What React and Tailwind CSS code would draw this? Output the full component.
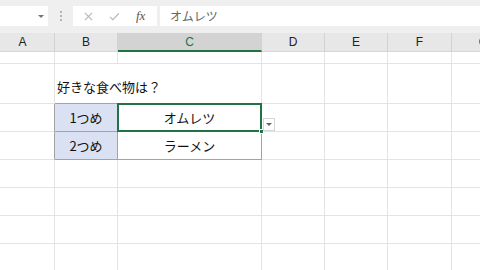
const FONT = { fontFamily: '"Liberation Sans", "Noto Sans CJK JP", sans-serif' };
const JP = { fontFamily: '"Noto Sans CJK JP", "Liberation Sans", sans-serif' };

const cols = [
    { key: 'A', w: 'w-[64px] -ml-[9px]' },
    { key: 'B', w: 'w-[63px]' },
    { key: 'C', w: 'w-[144px]' },
    { key: 'D', w: 'w-[63px]' },
    { key: 'E', w: 'w-[63px]' },
    { key: 'F', w: 'w-[64px]' },
    { key: 'G', w: 'w-[64px]' },
];

const rows = [
    { h: 'h-[12px]' },
    { h: 'h-[40px]' },
    { h: 'h-[28px]' },
    { h: 'h-[28px]' },
    { h: 'h-[28px]' },
    { h: 'h-[28px]' },
    { h: 'h-[28px]' },
    { h: 'h-[28px]' },
    { h: 'h-[28px]' },
];

// tabla B3:C4
function inTable(r, c) {
    return (r === 2 || r === 3) && (c === 'B' || c === 'C');
}

function Cell({ r, c, w }) {
    const darkRight = (r === 2 || r === 3) && (c === 'A' || c === 'B' || c === 'C');
    const darkBottom = (r >= 1 && r <= 3) && (c === 'B' || c === 'C');
    const hideRight = r === 1 && c === 'B';
    const active = r === 2 && c === 'C';

    let content = null;
    if (r === 1 && c === 'B') {
        content = (
            <span className="absolute left-[2px] top-[13px] whitespace-nowrap text-[13px] text-[#111]" style={JP}>
                好きな食べ物は？
            </span>
        );
    }
    if (inTable(r, c)) {
        const labels = { B2: '1つめ', B3: '2つめ', C2: 'オムレツ', C3: 'ラーメン' };
        content = (
            <span className="flex h-full items-center justify-center text-[13px] text-[#111]" style={JP}>
                {labels[c + r]}
            </span>
        );
    }

    return (
        <div
            className={[
                'relative shrink-0 border-b border-r',
                w,
                c === 'B' && inTable(r, c) ? 'bg-[#d9e1f2]' : 'bg-white',
                hideRight ? 'border-r-transparent' : darkRight ? 'border-r-[#a3a3a3]' : 'border-r-[#e3e3e3]',
                darkBottom ? 'border-b-[#a3a3a3]' : 'border-b-[#e3e3e3]',
                hideRight ? 'z-10' : '',
                active ? 'z-20' : '',
            ].join(' ')}
        >
            {content}
            {active && (
                <>
                    <div className="pointer-events-none absolute -left-[1px] -top-[1px] bottom-[-1px] right-[-1px] border-2 border-[#217346]" />
                    <div className="absolute -bottom-[3px] -right-[3px] h-[5px] w-[5px] border border-white bg-[#217346]" />
                    <div className="absolute -right-[14px] top-[14px] flex h-[13px] w-[12px] items-center justify-center border border-[#d6d6d6] bg-white">
                        <span className="h-0 w-0 border-x-[3px] border-t-[3px] border-x-transparent border-t-[#666]" />
                    </div>
                </>
            )}
        </div>
    );
}

export default function App() {
    return (
        <div className="h-[270px] w-[480px] overflow-hidden bg-white" style={FONT}>
            {/* barra de fórmulas */}
            <div className="flex h-[33px] items-start bg-[#efefef] pt-[6px]">
                <div className="flex h-[20px] w-[48px] items-center justify-end bg-white pr-[4px]">
                    <span className="h-0 w-0 border-x-[3px] border-t-[3px] border-x-transparent border-t-[#777]" />
                </div>
                <div className="ml-[11px] flex h-[20px] w-[3px] flex-col items-center justify-center gap-[2px]">
                    <span className="h-[2px] w-[2px] bg-[#b5b5b5]" />
                    <span className="h-[2px] w-[2px] bg-[#b5b5b5]" />
                    <span className="h-[2px] w-[2px] bg-[#b5b5b5]" />
                </div>
                <div className="ml-[11px] flex h-[20px] w-[84px] items-center bg-white">
                    <svg className="ml-[11px] h-[9px] w-[9px]" viewBox="0 0 10 10">
                        <path d="M1 1L9 9M9 1L1 9" stroke="#b4b4b4" strokeWidth="1.2" fill="none" />
                    </svg>
                    <svg className="ml-[16px] h-[9px] w-[11px]" viewBox="0 0 12 10">
                        <path d="M1 5.5L4.2 8.5L11 1.5" stroke="#b4b4b4" strokeWidth="1.2" fill="none" />
                    </svg>
                    <span
                        className="ml-[16px] text-[13px] italic text-[#555]"
                        style={{ fontFamily: '"Liberation Serif", serif' }}
                    >
                        fx
                    </span>
                </div>
                <div className="ml-[3px] flex h-[20px] flex-1 items-center bg-white pl-[10px] text-[12px] text-[#666]" style={JP}>
                    オムレツ
                </div>
            </div>

            {/* encabezados de columna */}
            <div className="flex h-[19px] bg-[#e7e7e7]">
                {cols.map(({ key, w }) => (
                    <div
                        key={key}
                        className={[
                            'flex shrink-0 items-center justify-center border-r border-r-[#d2d2d2] text-[12px]',
                            w,
                            key === 'C'
                                ? 'border-b-2 border-b-[#217346] bg-[#d3d3d3] text-[#217346]'
                                : 'border-b border-b-[#d6d6d6] text-[#222]',
                        ].join(' ')}
                    >
                        {key}
                    </div>
                ))}
            </div>

            {/* celdas */}
            {rows.map(({ h }, r) => (
                <div key={r} className={'flex ' + h}>
                    {cols.map(({ key, w }) => (
                        <Cell key={key} r={r} c={key} w={w} />
                    ))}
                </div>
            ))}
        </div>
    );
}
